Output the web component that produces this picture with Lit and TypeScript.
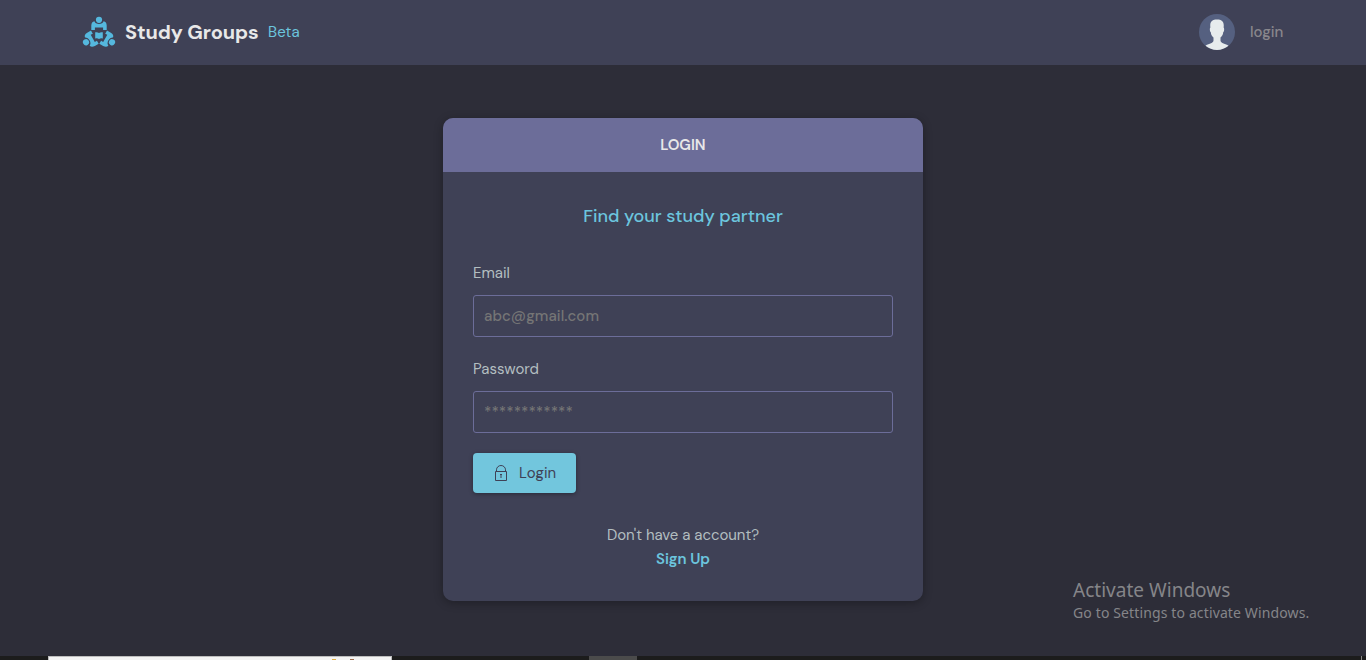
import { LitElement, html, css, svg } from "lit";
import { customElement } from "lit/decorators.js";

const figure = (angle: number) => svg`
  <g transform="rotate(${angle})">
    <circle cx="0" cy="-15" r="3.1"></circle>
    <path d="M-7.7 -4.8V-9.2Q-7.5 -13.2 -4.6 -13.5Q-3.6 -10.9 0 -10.9Q3.6 -10.9 4.6 -13.5Q7.5 -13.2 7.7 -9.2V-4.8H4.1V-7.2H-4.1V-4.8Z"></path>
  </g>`;

@customElement("app-root")
export class AppRoot extends LitElement {
  static styles = css`
    * { box-sizing: border-box; }
    :host {
      display: flex;
      flex-direction: column;
      position: relative;
      height: 660px;
      overflow: hidden;
      background: #2d2d38;
      color: #b3bec0;
      font: 15px/24px "DM Sans", Inter, sans-serif;
    }
    .bar {
      flex: none;
      display: flex;
      align-items: center;
      height: 65px;
      padding: 0 83px 1px;
      background: #3f4156;
    }
    .logo { width: 34px; height: 34px; margin-left: -1px; fill: #55b8de; }
    .brand { margin-left: 9px; width: 143px; font-size: 20px; font-weight: 700; color: #e8e8e8; white-space: nowrap; letter-spacing: -0.1px; }
    .beta { color: #6cc5de; letter-spacing: 0.1px; }
    .user { margin-left: auto; display: flex; align-items: center; }
    .avatar { width: 36px; height: 36px; margin-right: 15px; }
    .user-name { width: 33px; color: #89878c; font-weight: 500; white-space: nowrap; }
    .card {
      flex: none;
      align-self: center;
      width: 480px;
      height: 483px;
      margin-top: 53px;
      border-radius: 10px;
      overflow: hidden;
      background: #3f4156;
      box-shadow: 0 2px 10px rgba(0, 0, 0, 0.3);
    }
    .title { height: 54px; background: #6c6d99; color: #e8e8e8; font-weight: 600; text-align: center; line-height: 54px; }
    .body { display: flex; flex-direction: column; padding: 30px; }
    .lead { text-align: center; color: #6cc5de; font-size: 18px; font-weight: 500; line-height: 28px; margin-bottom: 31px; }
    .label { margin-bottom: 10px; }
    .input {
      height: 42px;
      width: 100%;
      margin-bottom: 20px;
      padding: 0 10px;
      border: 1px solid #6c6d99;
      border-radius: 3px;
      outline: none;
      background: transparent;
      color: #b3bec0;
      font: inherit;
      font-weight: 500;
      letter-spacing: 0.06px;
    }
    .input::placeholder { color: #757575; opacity: 1; }
    .button {
      align-self: flex-start;
      display: flex;
      align-items: center;
      width: 103px;
      height: 40px;
      padding: 0 0 0 20px;
      border: 0;
      border-radius: 4px;
      background: #72c6dd;
      color: #3f4156;
      font: inherit;
      letter-spacing: 0.12px;
      box-shadow: 0 1px 4px rgba(0, 0, 0, 0.35);
    }
    .lock { width: 16px; height: 18px; margin-right: 10px; fill: none; stroke: #3f4156; }
    .foot { margin-top: 30px; text-align: center; letter-spacing: -0.05px; }
    .signup { display: block; color: #6cc5de; font-weight: 600; }
    .watermark { position: absolute; left: 1073px; top: 578px; color: #858589; font-family: "Segoe UI", "Noto Sans", sans-serif; white-space: nowrap; }
    .mark-title { font-size: 19px; line-height: 24px; font-weight: 400; letter-spacing: 0.02px; }
    .mark-text { font-size: 14px; line-height: 21px; font-weight: 400; letter-spacing: 0.13px; }
    .taskbar { position: absolute; left: 0; right: 0; bottom: 0; height: 4px; display: flex; background: #1c1c1c; }
    .search { position: relative; margin-left: 48px; width: 344px; background: #f3f3f3; border: solid #bdbdbd; border-width: 1px 1px 0; }
    .dot { position: absolute; left: 283px; bottom: 0; width: 4px; height: 1px; background: #dfae43; }
    .dot.brown { left: 301px; background: #9b6b4d; }
    .task { margin-left: 197px; width: 48px; background: #4b4b4b; }
    .edge { margin-left: auto; margin-right: 4px; width: 1px; background: #888; }
  `;

  render() {
    return html`
      <header class="bar">
        <svg class="logo" viewBox="82 15 34 34">
          <g transform="translate(99 34.8)">
            ${figure(0)}${figure(120)}${figure(240)}
            <path d="M-3.8 -2.5Q-1.6 -3 0 -1.9Q1.6 -3 3.8 -2.5V3.7Q1.6 3.3 0 4.1Q-1.6 3.3 -3.8 3.7Z"></path>
          </g>
        </svg>
        <span class="brand">Study Groups</span>
        <span class="beta">Beta</span>
        <div class="user">
          <svg class="avatar" viewBox="0 0 36 36">
            <circle cx="18" cy="18" r="18" fill="#556080"></circle>
            <path fill="#e7eced" d="M6.5 31.8C9 29.5 14.5 29.5 14.5 26.5V23.5C12.5 22 12 20 11.8 18.2C10.6 17.4 10.6 14 11.4 13.4C10.6 8 13 5.5 18 5.5S25.4 8 24.6 13.4C25.4 14 25.4 17.4 24.2 18.2C24 20 23.5 22 21.5 23.5V26.5C21.5 29.5 27 29.5 29.5 31.8A18 18 0 0 1 6.5 31.8Z"></path>
          </svg>
          <span class="user-name">login</span>
        </div>
      </header>
      <main class="card">
        <div class="title">LOGIN</div>
        <div class="body">
          <div class="lead">Find your study partner</div>
          <label class="label">Email</label>
          <input class="input email" type="email" placeholder="abc@gmail.com" />
          <label class="label">Password</label>
          <input class="input password" type="password" placeholder="************" />
          <button class="button">
            <svg class="lock" viewBox="0 0 16 18">
              <path d="M2.5 7.5H13.5V16.5H2.5ZM3.5 7.5V5.8A4.5 4.3 0 0 1 12.5 5.8V7.5"></path>
              <path d="M7 10.5H9M8 10V14"></path>
            </svg>
            <span>Login</span>
          </button>
          <div class="foot">Don't have a account?<a class="signup">Sign Up</a></div>
        </div>
      </main>
      <div class="watermark">
        <div class="mark-title">Activate Windows</div>
        <div class="mark-text">Go to Settings to activate Windows.</div>
      </div>
      <div class="taskbar">
        <div class="search"><i class="dot"></i><i class="dot brown"></i></div>
        <div class="task"></div>
        <div class="edge"></div>
      </div>
    `;
  }
}
